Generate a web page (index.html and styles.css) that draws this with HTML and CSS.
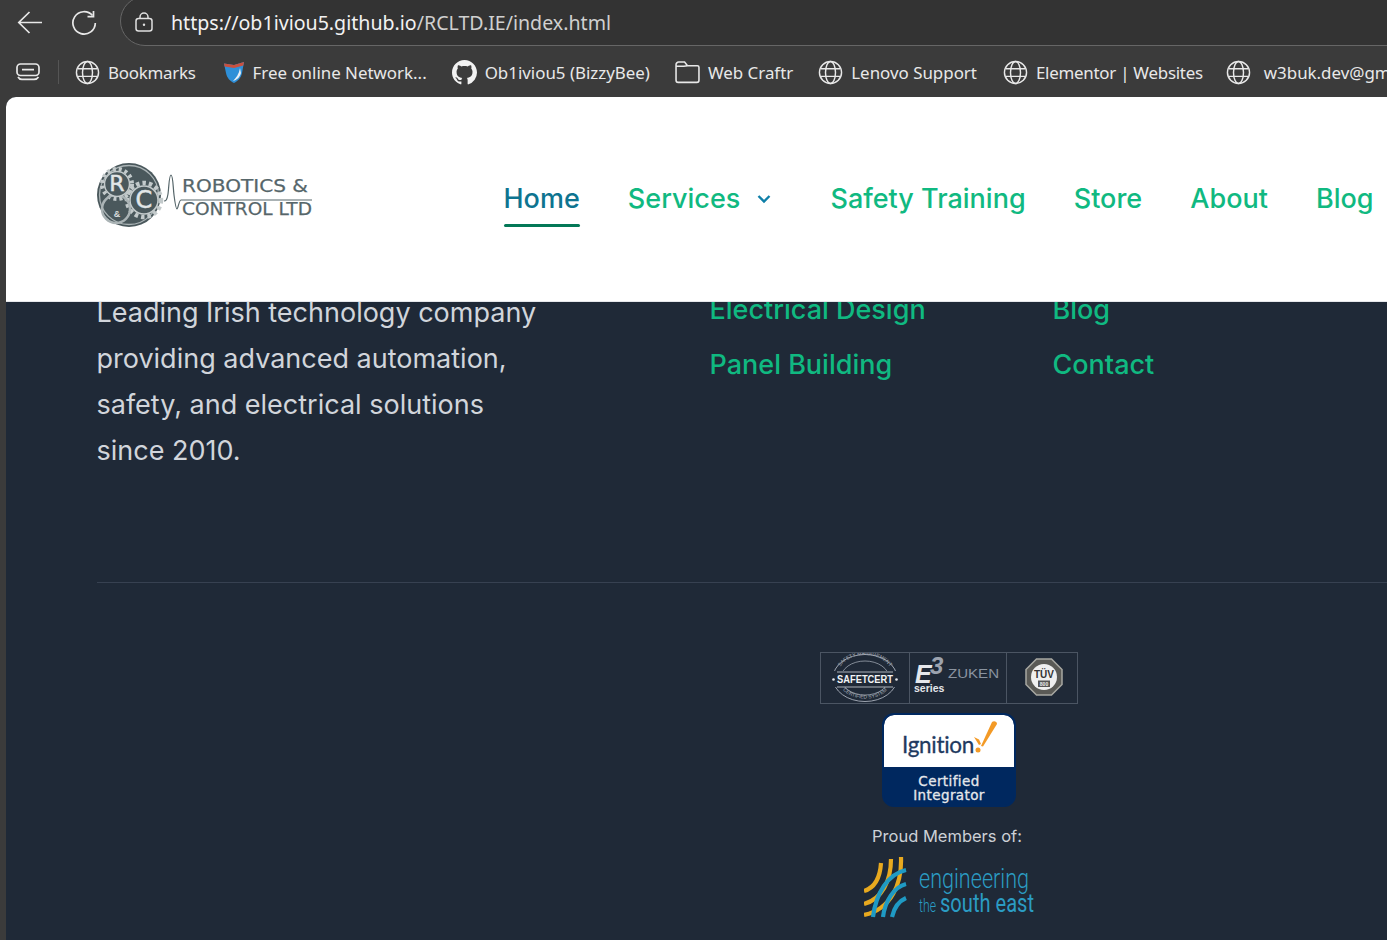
FILE: index.html
```html
<!DOCTYPE html>
<html lang="en">
<head>
<meta charset="utf-8">
<title>Robotics &amp; Control Ltd</title>
<link rel="stylesheet" href="styles.css">
</head>
<body>
<svg class="defs" width="0" height="0" aria-hidden="true">
  <symbol id="globe" viewBox="0 0 26 26">
    <g fill="none" stroke="currentColor" stroke-width="1.5">
      <circle cx="13" cy="13" r="11.5"/>
      <ellipse cx="13" cy="13" rx="5.2" ry="11.5"/>
      <path d="M2.6 9h20.8M2.6 17h20.8"/>
    </g>
  </symbol>
</svg>
<div class="toolbar">
  <button class="tool tool-back" aria-label="Back">
    <svg width="26" height="24" viewBox="0 0 26 24" fill="none" stroke="#e8e8e8" stroke-width="1.7"><path d="M25 11.5H2M12.5 1 1.8 11.5 12.5 22"/></svg>
  </button>
  <button class="tool tool-reload" aria-label="Reload">
    <svg width="26" height="26" viewBox="0 0 26 26" fill="none" stroke="#e8e8e8" stroke-width="1.7"><path d="M21.5 5.5A11.2 11.2 0 1 0 24.3 13"/><path d="M22.5 1v5.6h-6"/></svg>
  </button>
  <div class="address">
    <svg class="lock" width="18" height="20" viewBox="0 0 18 20" fill="none" stroke="#e0e0e0" stroke-width="1.5"><rect x="1" y="6.5" width="16" height="12.5" rx="2.5"/><path d="M5 6.5V5a4 4 0 0 1 8 0v1.5"/><circle cx="9" cy="12.7" r="1.2" fill="#e0e0e0" stroke="none"/></svg>
    <span class="url"><span class="url-host">https://ob1iviou5.github.io</span>/RCLTD.IE/index.html</span>
  </div>
</div>
<div class="bookmarks">
  <svg class="collections" width="24" height="18" viewBox="0 0 24 18" fill="none" stroke="#e8e8e8" stroke-width="1.7"><rect x="1" y="1" width="22" height="11.5" rx="3.5"/><path d="M6 6.7h12M2 14c1 1.800 2 2.400 4 2.400h12c2 0 3.500-.8 4.500-2.400"/></svg>
  <span class="divider"></span>
  <a class="mark mark-tight mark-first"><svg class="ico"><use href="#globe"/></svg>Bookmarks</a>
  <a class="mark"><svg class="ico ico-shield" viewBox="0 0 22 24"><path d="M1 3.500 11 5l10-3-2 11c-1 5-4 8-8 10-4-2-7-5-8-10z" fill="#2e8fd8"/><path d="M1 3.500 11 5l10-3-.7 3.500L11 8 1.600 6.500z" fill="#c9503f"/><path d="M17 8c-1 6-4 10-7 13 4-1 7-4 8-8z" fill="#e8eef4"/></svg>Free online Network...</a>
  <a class="mark"><svg class="ico" viewBox="0 0 16 16" fill="#f2f2f2"><path d="M8 0C3.580 0 0 3.580 0 8c0 3.540 2.290 6.530 5.470 7.590.4.070.55-.17.55-.38 0-.19-.01-.82-.01-1.490-2.010.37-2.530-.49-2.690-.94-.09-.23-.48-.94-.82-1.130-.28-.15-.68-.52-.01-.53.63-.01 1.080.58 1.230.82.72 1.210 1.870.87 2.330.66.070-.52.28-.87.51-1.070-1.780-.2-3.640-.89-3.640-3.950 0-.87.31-1.590.82-2.150-.08-.2-.36-1.020.08-2.120 0 0 .67-.21 2.200.82.64-.18 1.320-.27 2-.27s1.360.09 2 .27c1.530-1.040 2.200-.82 2.200-.82.44 1.100.16 1.920.08 2.120.51.56.82 1.270.82 2.150 0 3.070-1.870 3.750-3.650 3.950.29.25.54.73.54 1.480 0 1.070-.01 1.930-.01 2.200 0 .21.15.46.55.38A8.013 8.013 0 0 0 16 8c0-4.420-3.580-8-8-8z"/></svg>Ob1iviou5 (BizzyBee)</a>
  <a class="mark"><svg class="ico" viewBox="0 0 24 24" fill="none" stroke="#e8e8e8" stroke-width="1.5"><path d="M1 6V4.500A2.500 2.500 0 0 1 3.500 2h5.700L12 5.500h9.500A1.500 1.500 0 0 1 23 7v12.500a2 2 0 0 1-2 2H3a2 2 0 0 1-2-2zM1 6h7.500L12 5.500"/></svg>Web Craftr</a>
  <a class="mark"><svg class="ico"><use href="#globe"/></svg>Lenovo Support</a>
  <a class="mark mark-tight mark-el"><svg class="ico"><use href="#globe"/></svg>Elementor | Websites</a>
  <a class="mark mark-wide"><svg class="ico"><use href="#globe"/></svg>w3buk.dev@gmail.com</a>
</div>
<div class="page">
  <header class="site-header">
    <svg class="logo" width="216" height="68" viewBox="0 0 216 68">
      <circle cx="32" cy="34" r="32" fill="#4a585c"/>
      <circle cx="32" cy="34" r="29.500" fill="none" stroke="#aab3b5" stroke-width="1.300"/>
      <circle cx="32" cy="34" r="27.500" fill="#4a585c"/>
      <circle cx="20" cy="23" r="15" fill="none" stroke="#c3cacb" stroke-width="4" stroke-dasharray="3 3"/>
      <circle cx="47" cy="39" r="17" fill="none" stroke="#c3cacb" stroke-width="4.500" stroke-dasharray="3.500 3"/>
      <circle cx="19" cy="48" r="14" fill="none" stroke="#aab3b5" stroke-width="2.500"/>
      <circle cx="20" cy="23" r="12.500" fill="#4a585c" stroke="#c3cacb" stroke-width="1.500"/>
      <circle cx="47" cy="39" r="14" fill="#4a585c" stroke="#c3cacb" stroke-width="1.500"/>
      <text class="logo-mono" x="20" y="30" text-anchor="middle">R</text>
      <text class="logo-mono logo-mono-c" x="47" y="47" text-anchor="middle">C</text>
      <text class="logo-amp" x="20" y="56" text-anchor="middle">&amp;</text>
      <path d="M67 40c2 0 3-1 4-7 1-7 1-19 3-19s2 12 3 20c1 8 2 14 3 14s2-9 4-9h131" fill="none" stroke="#56666a" stroke-width="1.200"/>
      <text class="logo-text" x="85" y="31" textLength="126" lengthAdjust="spacingAndGlyphs">ROBOTICS &amp;</text>
      <text class="logo-text" x="85" y="54" textLength="130" lengthAdjust="spacingAndGlyphs">CONTROL LTD</text>
    </svg>
    <nav class="nav">
      <a class="nav-link nav-active">Home</a>
      <a class="nav-link nav-services">Services
        <svg width="14" height="10" viewBox="0 0 14 10" fill="none" stroke="#0e7fa8" stroke-width="2.400"><path d="m1.500 2 5.500 5.500L12.500 2"/></svg>
      </a>
      <a class="nav-link">Safety Training</a>
      <a class="nav-link">Store</a>
      <a class="nav-link">About</a>
      <a class="nav-link">Blog</a>
    </nav>
  </header>
  <footer class="site-footer">
    <div class="footer-inner">
      <div class="footer-cols">
        <p class="about">Leading Irish technology company providing advanced automation, safety, and electrical solutions since 2010.</p>
        <ul class="links">
          <li>Electrical Design</li>
          <li>Panel Building</li>
        </ul>
        <ul class="links">
          <li>Blog</li>
          <li>Contact</li>
        </ul>
      </div>
      <div class="footer-bottom">
        <div class="certs">
          <div class="cert cert-safe">
            <svg width="68" height="50" viewBox="0 0 68 50">
              <ellipse cx="34" cy="25" rx="32" ry="23.500" fill="none" stroke="#9ca3af" stroke-width="1"/>
              <ellipse cx="34" cy="25" rx="24" ry="17" fill="none" stroke="#9ca3af" stroke-width=".8"/>
              <path id="arcTop" d="M7 22A27 20 0 0 1 61 22" fill="none"/>
              <path id="arcBot" d="M8 31A27 20 0 0 0 60 31" fill="none"/>
              <text class="cert-tiny"><textPath href="#arcTop" startOffset="50%" text-anchor="middle">SAFETY MANAGEMENT</textPath></text>
              <text class="cert-tiny"><textPath href="#arcBot" startOffset="50%" text-anchor="middle">CERTIFIED SYSTEM</textPath></text>
              <rect x="0" y="18" width="68" height="16" fill="#1f2937"/>
              <path d="M6 19h56M6 34h56" stroke="#d1d5db" stroke-width=".8"/>
              <text class="cert-safe-text" x="34" y="30" text-anchor="middle" textLength="56" lengthAdjust="spacingAndGlyphs">SAFETCERT</text>
              <circle cx="2.500" cy="26.500" r="1.300" fill="#e5e7eb"/><circle cx="65.500" cy="26.500" r="1.300" fill="#e5e7eb"/>
            </svg>
          </div>
          <div class="cert cert-e3">
            <svg width="90" height="50" viewBox="0 0 90 50">
              <text class="e3-e" x="2" y="30">E</text>
              <text class="e3-3" x="17" y="21">3</text>
              <text class="e3-z" x="35" y="25" textLength="51" lengthAdjust="spacingAndGlyphs">ZUKEN</text>
              <text class="e3-s" x="1" y="39">series</text>
            </svg>
          </div>
          <div class="cert cert-tuv">
            <svg class="tuv-badge" width="38" height="38" viewBox="0 0 38 38">
              <path d="M11.500 1h15L37 11.500v15L26.500 37h-15L1 26.500v-15z" fill="#5a5a56" stroke="#a8a8a2" stroke-width="1.500"/>
              <circle cx="19" cy="19" r="13" fill="#efefef"/>
              <text class="tuv" x="19" y="20" text-anchor="middle" textLength="20" lengthAdjust="spacingAndGlyphs">TÜV</text>
              <rect x="13" y="22.500" width="12" height="6.500" fill="#555"/>
              <text class="tuv-n" x="19" y="27.500" text-anchor="middle">800</text>
            </svg>
          </div>
        </div>
        <div class="ignition">
          <div class="ign-top">
            <span class="ign-word">Ignition</span>
            <svg class="ign-mark" width="24" height="33" viewBox="0 0 24 33"><path d="M18 1c2-1.500 5-.5 5 2L9 25.500 7 25z" fill="#f39a26"/><circle cx="4" cy="29" r="2.500" fill="#f39a26"/><path d="M0 16l5 2.500 2 4.500-2 1z" fill="#f39a26"/></svg>
          </div>
          <div class="ign-bottom">Certified<br>Integrator</div>
        </div>
        <p class="proud">Proud Members of:</p>
        <svg class="ese" width="172" height="64" viewBox="0 0 172 64">
          <g fill="none" stroke-width="4.200" stroke="#e8a91f">
            <path d="M17 8C16 24 10 33 0 36"/>
            <path d="M27 4C27 26 18 44 0 49"/>
            <path d="M37 2C38 28 28 54 0 60"/>
          </g>
          <g fill="none" stroke-width="4.200" stroke="#1f9ac4">
            <path d="M42 15C24 19 12 38 9 62"/>
            <path d="M42 29C30 32 21 46 19 62"/>
            <path d="M42 43C35 46 30 53 28 62"/>
          </g>
          <text class="ese-eng" x="55" y="33" textLength="110" lengthAdjust="spacingAndGlyphs">engineering</text>
          <text class="ese-the" x="55" y="57" textLength="17" lengthAdjust="spacingAndGlyphs">the</text>
          <text class="ese-south" x="76" y="57" textLength="94" lengthAdjust="spacingAndGlyphs">south east</text>
        </svg>
      </div>
    </div>
  </footer>
</div>
</body>
</html>
```

FILE: styles.css
```css
* { box-sizing: border-box; }
html, body { margin: 0; height: 100%; }
body {
  width: 1387px;
  height: 940px;
  overflow: hidden;
  display: flex;
  flex-direction: column;
  background: #3b3b3b;
  font-family: "Noto Sans", "Open Sans", sans-serif;
}
.defs { display: block; height: 0; }

/* browser chrome */
.toolbar {
  flex: none;
  height: 46px;
  display: flex;
  align-items: center;
  padding-left: 17px;
  overflow: hidden;
}
.tool { flex: none; padding: 0; border: 0; background: none; display: flex; }
.tool-reload { margin-left: 28px; }
.address {
  flex: none;
  width: 1300px;
  height: 50px;
  margin: -4px 0 0 23px;
  padding: 2px 0 0 14px;
  display: flex;
  align-items: center;
  gap: 18px;
  background: #333;
  border: 1px solid #666;
  border-radius: 25px;
  color: #d0d0d0;
  font-size: 19.600px;
}
.url-host { color: #f2f2f2; }
.bookmarks {
  flex: none;
  height: 51px;
  display: flex;
  align-items: center;
  padding: 1px 0 0 16px;
  overflow: hidden;
  color: #e8e8e8;
  font-size: 16.900px;
  white-space: nowrap;
}
.collections { flex: none; }
.divider { flex: none; width: 1px; height: 24px; margin: 0 16px 0 18px; background: #555; }
.mark { display: flex; align-items: center; gap: 8px; margin-right: 25px; flex: none; color: #e8e8e8; }
.mark-tight { letter-spacing: -.25px; }
.mark-first { margin-right: 27px; }
.mark-el { margin-left: 1px; margin-right: 23px; }
.ico { width: 25px; height: 25px; flex: none; }
.ico-shield { width: 22px; height: 24px; }
.mark-wide { gap: 13px; }

/* page */
.page {
  flex: 1;
  min-height: 0;
  margin-left: 6px;
  display: flex;
  flex-direction: column;
  overflow: hidden;
  border-top-left-radius: 10px;
  background: #1f2937;
  font-family: Inter, "Liberation Sans", sans-serif;
}
.site-header {
  position: relative;
  z-index: 1;
  flex: none;
  height: 205px;
  display: flex;
  align-items: center;
  padding-left: 91px;
  background: #fff;
  border-bottom: 1px solid #e5e7eb;
  white-space: nowrap;
}
.logo { flex: none; margin-top: -9px; }
.logo-mono { font: 400 22px "DejaVu Sans", sans-serif; fill: #e2e6e7; stroke: #e2e6e7; stroke-width: .5; }
.logo-mono-c { font-size: 24px; }
.logo-amp { font: 700 9px "Liberation Sans", sans-serif; fill: #d7dcdd; }
.logo-text { font: 400 18px "DejaVu Sans", sans-serif; fill: #56666a; stroke: #56666a; stroke-width: .25; }
.nav { display: flex; gap: 48.100px; margin-left: 190.500px; flex: none; }
.nav-link {
  position: relative;
  padding: 4px 0;
  color: #10b981;
  font-size: 27px;
  font-weight: 500;
  line-height: 42px;
}
.nav-active { color: #0e7490; }
.nav-active::after {
  content: "";
  position: absolute;
  left: 0;
  right: 0;
  bottom: -3px;
  height: 3px;
  border-radius: 2px;
  background: #047857;
}
.nav-services { display: flex; align-items: center; gap: 17px; padding-right: 11px; }

/* footer */
.site-footer { flex: 1; min-height: 0; margin-top: -13px; overflow: hidden; }
.footer-inner { width: 1704px; margin-left: 91px; }
.footer-cols {
  display: grid;
  grid-template-columns: 612.500px 343px 1fr;
  height: 294px;
  border-bottom: 1px solid #374151;
}
.about { width: 450px; margin: 1px 0 0 -.5px; color: #d1d5db; font-size: 27px; line-height: 46px; }
.links { margin: 0; padding: 0; list-style: none; color: #10b981; font-size: 27px; font-weight: 500; line-height: 42px; }
.links li + li { margin-top: 13px; }
.footer-bottom { display: flex; flex-direction: column; align-items: center; padding-top: 69px; }
.certs { display: flex; height: 52px; border: 1px solid #4b5563; }
.cert { display: flex; align-items: center; justify-content: center; }
.cert + .cert { border-left: 1px solid #4b5563; }
.cert-safe { width: 88px; }
.cert-e3 { width: 97px; }
.cert-tuv { width: 71px; }
.tuv-badge { margin-left: 3px; margin-top: -2px; }
.cert-tiny { font: 400 5px "Liberation Sans", sans-serif; fill: #aab1bb; }
.cert-safe-text { font: 700 11px "Liberation Sans", sans-serif; fill: #f3f4f6; }
.e3-e { font: italic 700 25px "Liberation Sans", sans-serif; fill: #e5e7eb; }
.e3-3 { font: italic 700 24px "Liberation Sans", sans-serif; fill: #9ca3af; }
.e3-z { font: 400 12px "Liberation Sans", sans-serif; fill: #8b94a0; }
.e3-s { font: 700 10.500px "Liberation Sans", sans-serif; fill: #e5e7eb; }
.tuv { font: 700 11px "Liberation Sans", sans-serif; fill: #333; }
.tuv-n { font: 700 5px "Liberation Sans", sans-serif; fill: #eee; }

.ignition {
  width: 134px;
  height: 94px;
  margin-top: 9px;
  display: flex;
  flex-direction: column;
  overflow: hidden;
  border: 2px solid #00285f;
  border-radius: 12px;
  background: #00285f;
}
.ign-top {
  flex: none;
  height: 52px;
  display: flex;
  align-items: center;
  justify-content: center;
  padding: 6px 0 0 2px;
  background: #fff;
  border-radius: 10px 10px 0 0;
}
.ign-word { color: #1f3a5f; font: 400 22.500px Lato, sans-serif; letter-spacing: -.3px; -webkit-text-stroke: .3px #1f3a5f; }
.ign-mark { margin: -14px 0 0 0; }
.ign-bottom {
  flex: 1;
  padding-top: 7px;
  color: #e5e7eb;
  font: 400 13.500px/14px "DejaVu Sans", sans-serif;
  letter-spacing: .4px;
  -webkit-text-stroke: .3px #e5e7eb;
  text-align: center;
}
.proud { margin: 17px 4px 7px 0; color: #ccd0d6; font-size: 16.500px; line-height: 24px; }
.ese { display: block; margin-left: 2px; }
.ese-eng { font: 300 27px Roboto, sans-serif; fill: #2b9cc3; }
.ese-the { font: 300 18px Roboto, sans-serif; fill: #2b9cc3; }
.ese-south { font: 400 26px Roboto, sans-serif; fill: #2b9cc3; }
```
